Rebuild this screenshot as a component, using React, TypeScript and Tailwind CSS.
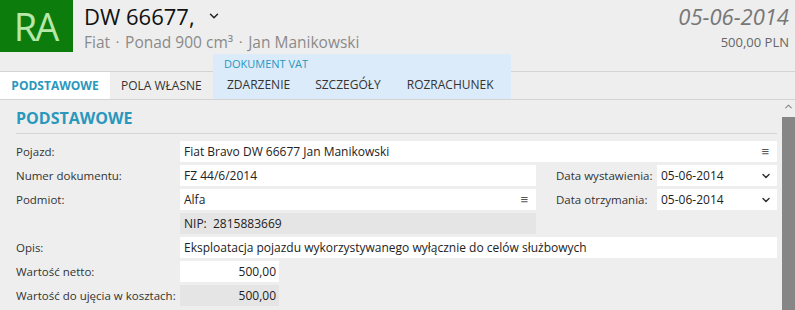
import React from 'react';
import { ChevronDown, ChevronUp } from 'lucide-react';

const Menu = () => <span className="text-[13px] leading-none text-[#555]">≡</span>;
const Chev = () => <ChevronDown className="w-[12px] h-[12px] text-[#333]" strokeWidth={3} />;

const Label: React.FC<{ text: string }> = ({ text }) => (
  <div className="w-[164px] shrink-0 whitespace-nowrap text-[11.5px] text-[#333]">{text}</div>
);

const App: React.FC = () => {
  return (
    <div className="w-[795px] h-[310px] bg-[#eeeeee] overflow-hidden font-['Open_Sans',sans-serif] text-[#222]">
      {/* header */}
      <div className="flex h-[55px] w-full">
        <div className="w-[73px] h-[52px] shrink-0 bg-[#0c7d0c] flex items-center justify-center text-[38px] text-[#b7e7a9] leading-none tracking-[-2px] pr-[2px]">
          RA
        </div>
        <div className="ml-[11px] flex flex-col">
          <div className="flex items-center h-[31px]">
            <span className="text-[22px] leading-none text-[#111]">DW 66677,</span>
            <ChevronDown className="ml-[12px] w-[14px] h-[14px] text-[#222]" strokeWidth={2.5} />
          </div>
          <div className="text-[15.5px] leading-none text-[#8a8a8a] mt-[4px] flex items-center whitespace-nowrap">
            Fiat<span className="mx-[6px] text-[8px] -translate-y-[1px]">•</span>Ponad 900 cm³<span className="mx-[6px] text-[8px] -translate-y-[1px]">•</span>Jan Manikowski
          </div>
        </div>
        <div className="flex-1 pr-[6px] flex flex-col items-end">
          <div className="h-[31px] flex items-center text-[22px] italic text-[#777] leading-none">05-06-2014</div>
          <div className="mt-[5px] text-[13px] text-[#666] leading-none">500,00 PLN</div>
        </div>
      </div>

      {/* tabs */}
      <div className="flex items-end h-[45px] border-b border-[#d4d4d4] text-[12px] uppercase">
        <div className="w-[110px] h-[28px] bg-white border-t border-[#d4d4d4] flex items-center justify-center font-bold text-[#2a97bd]">
          Podstawowe
        </div>
        <div className="w-[103px] h-[28px] border-t border-[#d4d4d4] flex items-center pl-[11px] text-[#333]">
          Pola własne
        </div>
        <div className="w-[298px] h-[45px] bg-[#dcebfa] flex flex-col">
          <div className="h-[17px] pl-[11px] pt-[2px] text-[11px] leading-none text-[#2a97bd] flex items-center">Dokument VAT</div>
          <div className="h-[28px] flex items-center text-[#333]">
            <span className="ml-[14px]">Zdarzenie</span>
            <span className="ml-[25px]">Szczegóły</span>
            <span className="ml-[26px]">Rozrachunek</span>
          </div>
        </div>
        <div className="flex-1 h-[28px] border-t border-[#d4d4d4]" />
      </div>

      {/* content */}
      <div className="flex h-[210px]">
        <div className="flex-1 pl-[16px] pr-[5px]">
          <div className="h-[34px] flex items-center border-b border-[#d4d4d4] text-[16px] font-bold text-[#2a97bd] pt-[2px]">
            PODSTAWOWE
          </div>
          <div className="flex flex-col gap-[3px] pt-[7px] text-[12px] text-[#222]">
            <div className="flex items-center h-[21px]">
              <Label text="Pojazd:" />
              <div className="flex-1 h-full bg-white flex items-center justify-between pl-[4px] pr-[8px]">
                <span>Fiat Bravo DW 66677 Jan Manikowski</span>
                <Menu />
              </div>
            </div>
            <div className="flex items-center h-[21px]">
              <Label text="Numer dokumentu:" />
              <div className="w-[356px] h-full bg-white flex items-center pl-[4px]">FZ 44/6/2014</div>
              <div className="w-[121px] shrink-0 whitespace-nowrap pl-[20px] text-[11.5px] text-[#333]">Data wystawienia:</div>
              <div className="flex-1 h-full bg-white flex items-center justify-between pl-[4px] pr-[5px]">
                <span>05-06-2014</span>
                <Chev />
              </div>
            </div>
            <div className="flex items-center h-[21px]">
              <Label text="Podmiot:" />
              <div className="w-[356px] h-full bg-white flex items-center justify-between pl-[4px] pr-[8px]">
                <span>Alfa</span>
                <Menu />
              </div>
              <div className="w-[121px] shrink-0 whitespace-nowrap pl-[20px] text-[11.5px] text-[#333]">Data otrzymania:</div>
              <div className="flex-1 h-full bg-white flex items-center justify-between pl-[4px] pr-[5px]">
                <span>05-06-2014</span>
                <Chev />
              </div>
            </div>
            <div className="flex items-center h-[21px]">
              <Label text="" />
              <div className="w-[356px] h-full bg-[#e5e5e5] flex items-center pl-[4px]">NIP:&nbsp; 2815883669</div>
            </div>
            <div className="flex items-center h-[21px]">
              <Label text="Opis:" />
              <div className="flex-1 h-full bg-white flex items-center pl-[4px]">
                Eksploatacja pojazdu wykorzystywanego wyłącznie do celów służbowych
              </div>
            </div>
            <div className="flex items-center h-[21px]">
              <Label text="Wartość netto:" />
              <div className="w-[99px] h-full bg-white flex items-center justify-end pr-[3px]">500,00</div>
            </div>
            <div className="flex items-center h-[21px]">
              <Label text="Wartość do ujęcia w kosztach:" />
              <div className="w-[99px] h-full bg-[#e5e5e5] flex items-center justify-end pr-[3px]">500,00</div>
            </div>
          </div>
        </div>
        <div className="w-[13px] flex flex-col items-center">
          <ChevronUp className="w-[11px] h-[11px] mt-[1px] text-[#888]" strokeWidth={2.5} />
          <div className="mt-[5px] w-full flex-1 bg-[#868686]" />
        </div>
      </div>
    </div>
  );
};

export default App;
